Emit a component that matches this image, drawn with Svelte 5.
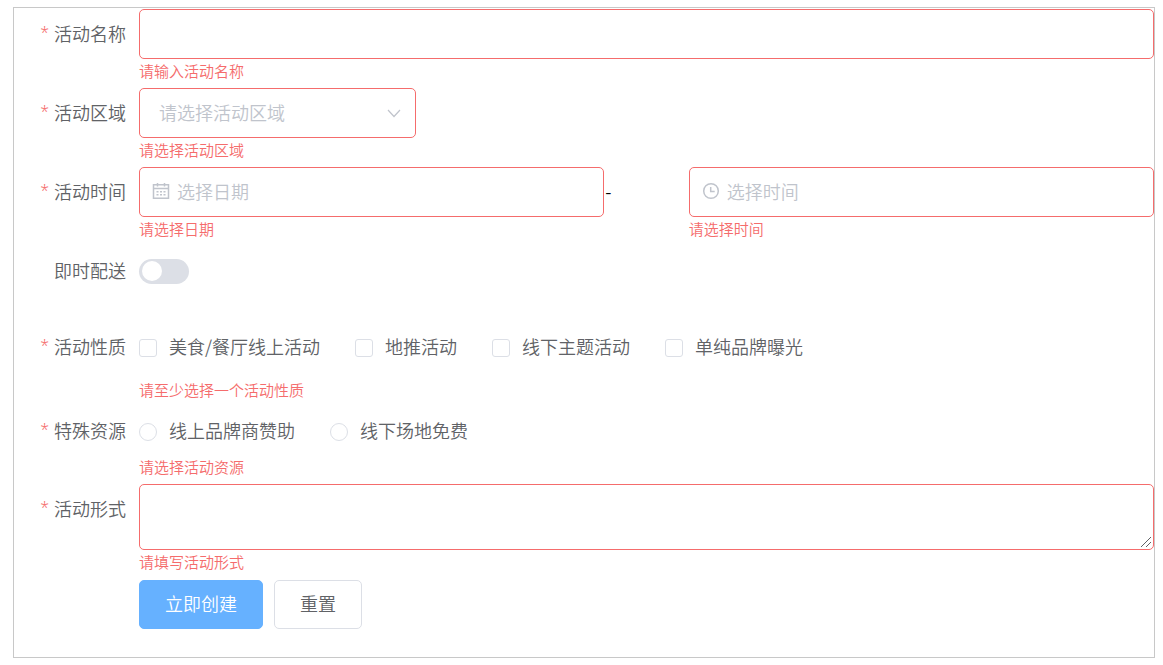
<script>
  const natures = ['美食/餐厅线上活动', '地推活动', '线下主题活动', '单纯品牌曝光'];
  const resources = ['线上品牌商赞助', '线下场地免费'];
  const regions = ['区域一', '区域二'];

  let name = $state('');
  let region = $state('');
  let date = $state('');
  let time = $state('');
  let delivery = $state(false);
  let nature = $state([]);
  let resource = $state('');
  let desc = $state('');

  function reset() {
    name = region = date = time = resource = desc = '';
    delivery = false;
    nature = [];
  }
</script>

<form class="frame" novalidate onsubmit={(e) => e.preventDefault()}>
  <div class="row">
    <label class="title required" for="name">活动名称</label>
    <div class="content">
      <input class="field" id="name" type="text" bind:value={name} />
      <p class="error">请输入活动名称</p>
    </div>
  </div>

  <div class="row">
    <label class="title required" for="region">活动区域</label>
    <div class="content">
      <div class="select">
        <select class="field" id="region" bind:value={region}>
          <option value="" disabled>请选择活动区域</option>
          {#each regions as item}
            <option value={item}>{item}</option>
          {/each}
        </select>
        <svg class="arrow" viewBox="0 0 14 14" aria-hidden="true"><path d="M1 4l6 6.5L13 4" /></svg>
      </div>
      <p class="error">请选择活动区域</p>
    </div>
  </div>

  <div class="row">
    <label class="title required" for="date">活动时间</label>
    <div class="content range">
      <div>
        <div class="picker">
          <svg class="icon" viewBox="0 0 18 18" aria-hidden="true">
            <path d="M1.5 2.8h15v13.4h-15zM1.5 6.5h15M5.5 1v3.5M12.5 1v3.5" />
            <path d="M4.5 9.8h2M8 9.8h2M11.5 9.8h2M4.5 12.8h2M8 12.8h2M11.5 12.8h2" />
          </svg>
          <input class="field" id="date" type="text" placeholder="选择日期" bind:value={date} />
        </div>
        <p class="error">请选择日期</p>
      </div>
      <span class="dash">-</span>
      <div>
        <div class="picker">
          <svg class="icon" viewBox="0 0 18 18" aria-hidden="true">
            <circle cx="9" cy="9" r="7.3" />
            <path d="M8.7 5v4.5h4" />
          </svg>
          <input class="field" type="text" placeholder="选择时间" aria-label="选择时间" bind:value={time} />
        </div>
        <p class="error">请选择时间</p>
      </div>
    </div>
  </div>

  <div class="row switch-row">
    <label class="title" for="delivery">即时配送</label>
    <div class="content">
      <input class="switch" id="delivery" type="checkbox" role="switch" bind:checked={delivery} />
    </div>
  </div>

  <div class="row choice-row" role="group" aria-labelledby="nature-title">
    <span class="title required" id="nature-title">活动性质</span>
    <div class="content">
      <div class="choices checks">
        {#each natures as item}
          <label class="choice"><input type="checkbox" value={item} bind:group={nature} />{item}</label>
        {/each}
      </div>
      <p class="error">请至少选择一个活动性质</p>
    </div>
  </div>

  <div class="row choice-row" role="radiogroup" aria-labelledby="resource-title">
    <span class="title required" id="resource-title">特殊资源</span>
    <div class="content">
      <div class="choices">
        {#each resources as item}
          <label class="choice"><input type="radio" name="resource" value={item} bind:group={resource} />{item}</label>
        {/each}
      </div>
      <p class="error">请选择活动资源</p>
    </div>
  </div>

  <div class="row">
    <label class="title required" for="desc">活动形式</label>
    <div class="content">
      <div class="area">
        <textarea class="field" id="desc" bind:value={desc}></textarea>
        <svg class="grip" viewBox="0 0 12 12" aria-hidden="true"><path d="M1 11L11 1M6 11l5-5" /></svg>
      </div>
      <p class="error">请填写活动形式</p>
    </div>
  </div>

  <div class="actions">
    <button class="primary" type="submit">立即创建</button>
    <button type="button" onclick={reset}>重置</button>
  </div>
</form>

<style>
  :global(body) {
    margin: 0;
    background: #fff;
  }

  .frame,
  .frame * {
    box-sizing: border-box;
  }

  .frame {
    margin: 7px 8px 7px 13px;
    padding: 1px 0 28px;
    border: 1px solid #c8c8c8;
    color: #606266;
    font: 18px/48px 'Noto Sans CJK SC', sans-serif;
    font-weight: 350;
  }

  .row {
    display: grid;
    grid-template-columns: 125px minmax(0, 1fr);
  }

  .title {
    padding-right: 13px;
    text-align: right;
  }

  .required::before {
    content: '*';
    margin-right: 5px;
    color: #f56c6c;
    font-family: 'Noto Sans', sans-serif;
    font-size: 16px;
    line-height: 1;
    vertical-align: 3px;
  }

  .field {
    display: block;
    width: 100%;
    height: 50px;
    margin: 0;
    padding: 0 19px 2px;
    border: 1px solid #f56c6c;
    border-radius: 5px;
    outline: none;
    background: #fff;
    color: #606266;
    font: inherit;
    line-height: 24px;
  }

  .field::placeholder {
    color: #c0c4cc;
    opacity: 1;
  }

  .area {
    position: relative;
  }

  textarea.field {
    height: 66px;
    padding: 6px 19px;
    resize: vertical;
  }

  textarea.field::-webkit-resizer {
    background: transparent;
  }

  .grip {
    position: absolute;
    right: 2px;
    bottom: 2px;
    width: 12px;
    height: 12px;
    fill: none;
    stroke: #606266;
    stroke-width: 1;
    pointer-events: none;
  }

  .error {
    margin: 0;
    padding: 2px 0 8px;
    color: #f56c6c;
    font-size: 15px;
    line-height: 19px;
  }

  .select {
    position: relative;
    width: 277px;
    max-width: 100%;
  }

  .select .field {
    appearance: none;
    color: #c0c4cc;
  }

  .arrow {
    position: absolute;
    top: 18px;
    right: 15px;
    width: 14px;
    height: 14px;
    fill: none;
    stroke: #c0c4cc;
    stroke-width: 1.2;
    pointer-events: none;
  }

  .range {
    display: grid;
    grid-template-columns: 11fr 2fr 11fr;
  }

  .dash {
    padding-left: 1px;
    color: #000;
  }

  .picker {
    position: relative;
  }

  .picker .field {
    padding-left: 37px;
  }

  .icon {
    position: absolute;
    top: 15px;
    left: 13px;
    width: 18px;
    height: 18px;
    fill: none;
    stroke: #c0c4cc;
    stroke-width: 1.5;
    pointer-events: none;
  }

  .switch-row {
    margin-bottom: 27px;
  }

  .switch-row .content {
    display: flex;
    align-items: center;
    height: 50px;
  }

  .switch {
    appearance: none;
    width: 50px;
    height: 25px;
    margin: 0;
    padding: 2px 3px;
    border-radius: 13px;
    background: #dcdfe6;
    cursor: pointer;
  }

  .switch::before {
    content: '';
    display: block;
    width: 20px;
    height: 20px;
    border-radius: 50%;
    background: #fff;
  }

  .switch:checked {
    padding-left: 26px;
    background: #409eff;
  }

  .choice-row {
    line-height: 46px;
  }

  .choices {
    display: flex;
    flex-wrap: wrap;
    column-gap: 35px;
  }

  .checks {
    margin-bottom: 7px;
  }

  .choice {
    display: flex;
    gap: 12px;
    height: 48px;
    cursor: pointer;
  }

  .choice input {
    appearance: none;
    width: 18px;
    height: 18px;
    margin: 16px 0 0;
    border: 1px solid #dcdfe6;
    border-radius: 3px;
    background: #fff;
  }

  .choice input[type='radio'] {
    border-radius: 50%;
  }

  .choice input:checked {
    border-color: #409eff;
    background: #409eff;
    box-shadow: inset 0 0 0 4px #fff;
  }

  .actions {
    display: flex;
    gap: 11px;
    margin: 1px 0 0 125px;
  }

  button {
    height: 49px;
    padding: 0 25px 3px;
    border: 1px solid #dcdfe6;
    border-radius: 5px;
    background: #fff;
    color: #606266;
    font: inherit;
    line-height: 24px;
    cursor: pointer;
  }

  .primary {
    border-color: #66b1ff;
    background: #66b1ff;
    color: #fff;
  }
</style>
